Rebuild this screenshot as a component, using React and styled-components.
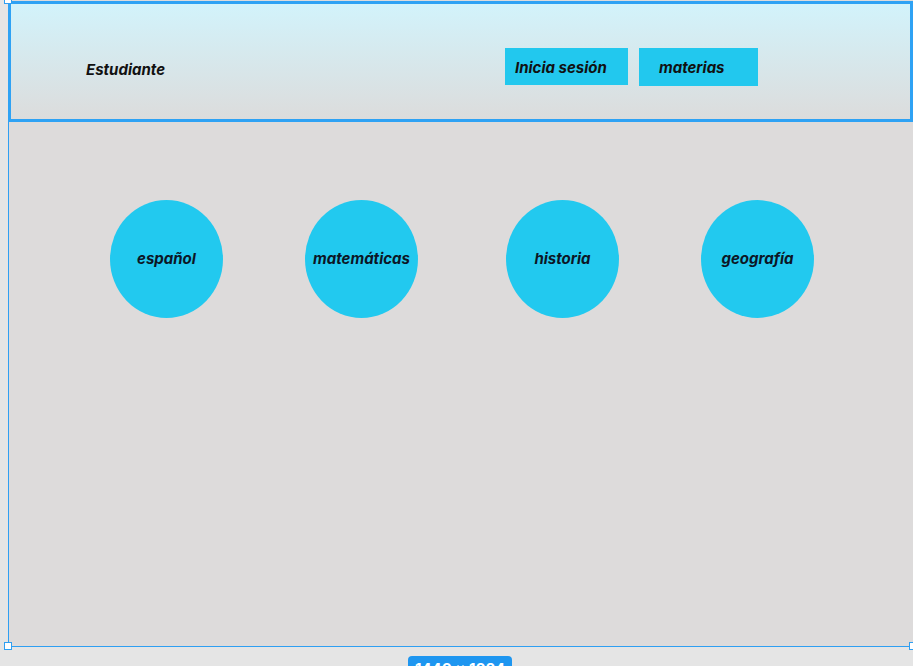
import React from "react";
import styled, { createGlobalStyle } from "styled-components";

const Global = createGlobalStyle`
  html, body { margin: 0; padding: 0; }
  body {
    background: #e5e5e5;
    font-family: Inter, "Liberation Sans", sans-serif;
    overflow: hidden;
  }
`;

const Canvas = styled.div`
  width: 913px;
  height: 666px;
  overflow: hidden;
  display: flex;
  flex-direction: column;
  background: #e5e5e5;
`;

const Frame = styled.div`
  position: relative;
  flex-shrink: 0;
  margin-left: 8px;
  width: 905px;
  height: 647px;
  box-sizing: border-box;
  border-left: 1px solid #2f9ff2;
  border-bottom: 1px solid #2f9ff2;
  background: #dddbdb;
  display: flex;
  flex-direction: column;
`;

const Header = styled.header`
  margin-top: 1px;
  height: 121px;
  box-sizing: border-box;
  border: 3px solid #2ea2f4;
  margin-left: -1px;
  background: linear-gradient(180deg, #d2f3fb 0%, #dcdcdc 100%);
  display: flex;
  align-items: flex-start;
  padding: 44px 0 0 75px;
`;

const Label = styled.span`
  font-style: italic;
  font-weight: 700;
  font-size: 15px;
  line-height: 18px;
  color: ${(p) => p.$color || "#111"};
`;

const Brand = styled.div`
  width: 419px;
  padding-top: 11px;
`;

const Nav = styled.nav`
  display: flex;
  gap: 11px;
`;

const NavButton = styled.div`
  width: ${(p) => p.$w}px;
  height: ${(p) => p.$h}px;
  box-sizing: border-box;
  padding-left: ${(p) => p.$pad}px;
  padding-top: 2px;
  background: #22c8ee;
  display: flex;
  align-items: center;
`;

const Subjects = styled.section`
  display: flex;
  gap: 82px;
  padding-left: 101px;
  padding-top: 78px;
`;

const Circle = styled.div`
  width: 113px;
  height: 118px;
  margin-left: ${(p) => p.$shift || 0}px;
  border-radius: 50%;
  background: #22c9ef;
  display: flex;
  align-items: center;
  justify-content: center;
`;

const Handle = styled.div`
  position: absolute;
  width: 8px;
  height: 8px;
  box-sizing: border-box;
  background: #fff;
  border: 1.5px solid #2f9ff2;
  left: ${(p) => p.$x}px;
  top: ${(p) => p.$y}px;
`;

const SizeRow = styled.div`
  display: flex;
  justify-content: center;
  width: 913px;
  padding-left: 7px;
  box-sizing: border-box;
  margin-top: 9px;
`;

const SizeTag = styled.div`
  background: #1e96f0;
  color: #fff;
  font-family: Inter, "Liberation Sans", sans-serif;
  font-weight: 700;
  font-size: 15px;
  line-height: 20px;
  padding: 3px 7px 0;
  border-radius: 4px;
`;

const subjects = [
  { name: "español", shift: 0 },
  { name: "matemáticas", shift: 0 },
  { name: "historia", shift: 6 },
  { name: "geografía", shift: 0 },
];

export default function App() {
  return (
    <Canvas>
      <Global />
      <Frame>
        <Header>
          <Brand>
            <Label>Estudiante</Label>
          </Brand>
          <Nav>
            <NavButton $w={123} $h={37} $pad={10}>
              <Label>Inicia sesión</Label>
            </NavButton>
            <NavButton $w={119} $h={38} $pad={20}>
              <Label>materias</Label>
            </NavButton>
          </Nav>
        </Header>
        <Subjects>
          {subjects.map((s) => (
            <Circle key={s.name} $shift={s.shift}>
              <Label $color="#0c1626">{s.name}</Label>
            </Circle>
          ))}
        </Subjects>
        <Handle $x={-5} $y={-4} />
        <Handle $x={-5} $y={642} />
        <Handle $x={900} $y={642} />
      </Frame>
      <SizeRow>
        <SizeTag>1440 × 1024</SizeTag>
      </SizeRow>
    </Canvas>
  );
}
